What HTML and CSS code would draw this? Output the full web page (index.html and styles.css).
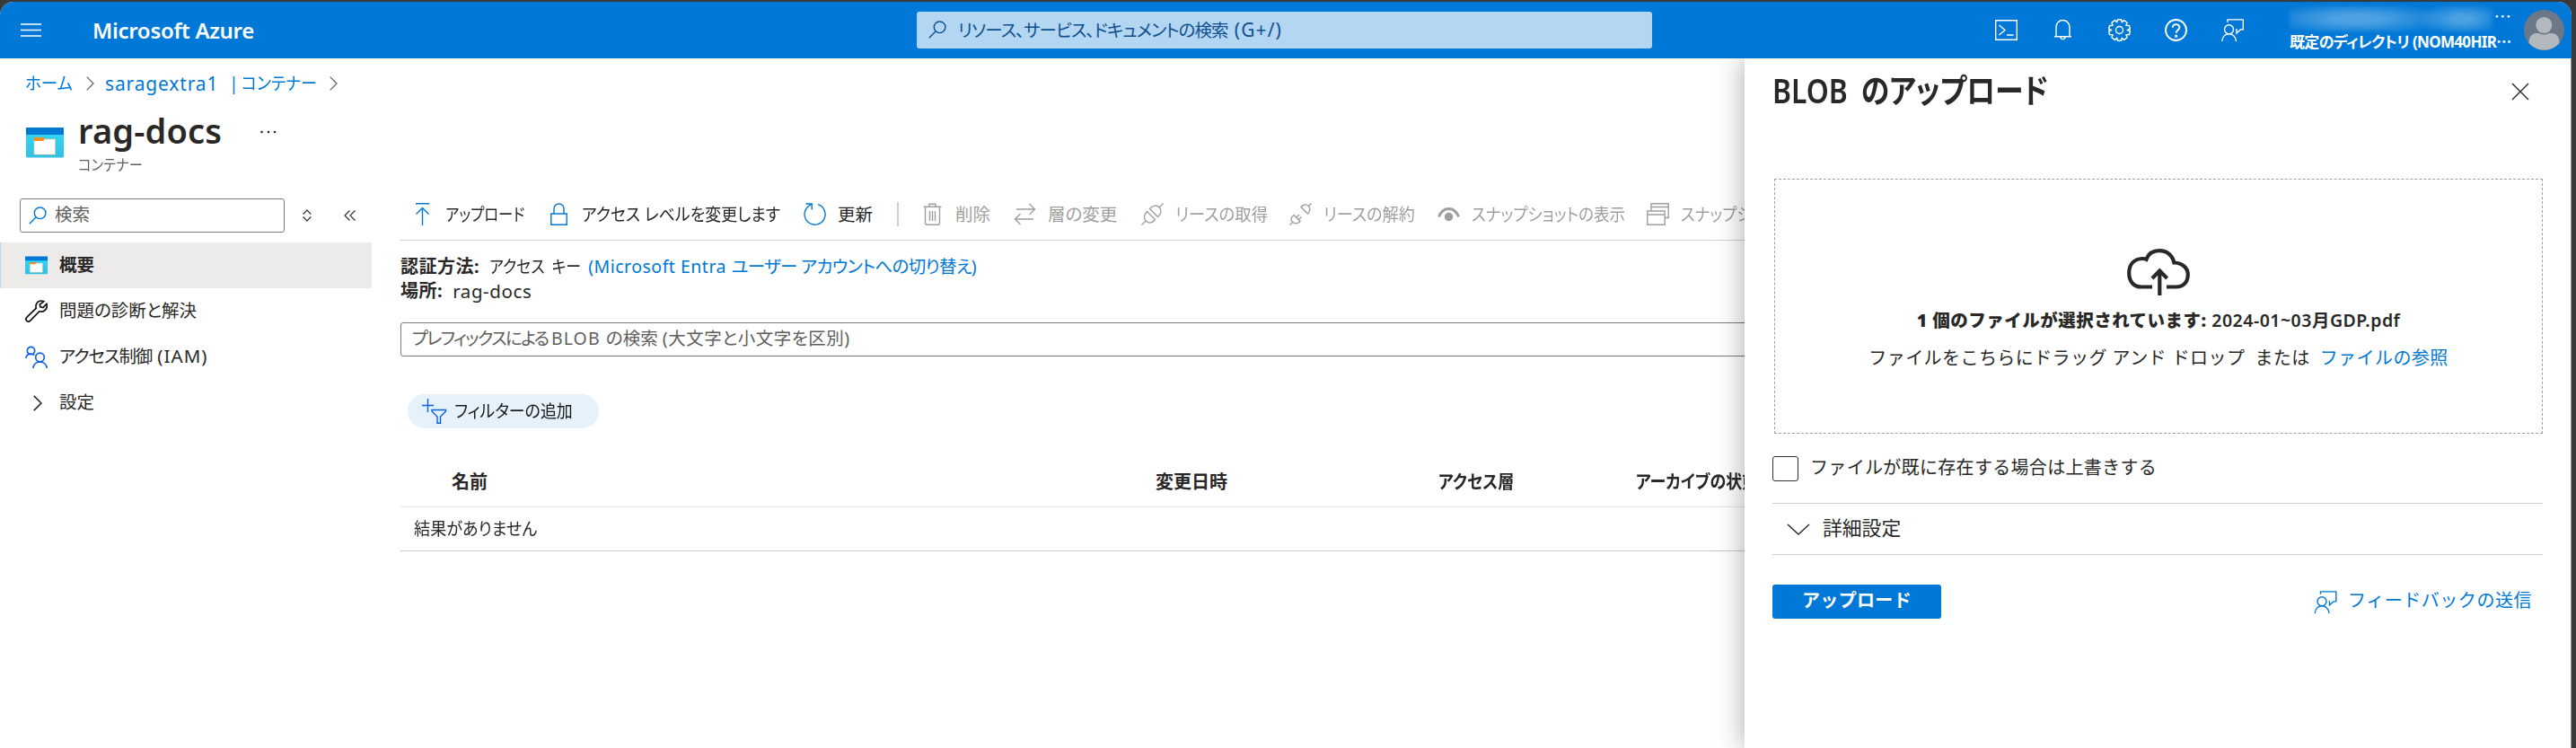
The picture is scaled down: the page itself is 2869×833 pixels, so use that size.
FILE: index.html
```html
<!DOCTYPE html>
<html lang="ja">
<head>
<meta charset="utf-8">
<title>rag-docs - Microsoft Azure</title>
<link rel="stylesheet" href="styles.css">
</head>
<body>
<svg class="defs" aria-hidden="true">
  <defs>
    <linearGradient id="teal" x1="0" y1="0" x2="0" y2="1"><stop offset="0" stop-color="#32d4f5"/><stop offset="1" stop-color="#32bfe0"/></linearGradient>
    <symbol id="i-container" viewBox="0 0 42 34">
      <path d="M0 7h42v25a1.5 1.5 0 0 1-1.5 1.5h-39A1.5 1.5 0 0 1 0 32z" fill="url(#teal)" stroke="none"/>
      <path d="M1 0h40a1 1 0 0 1 1 1v7H0V1a1 1 0 0 1 1-1z" fill="#0078d4" stroke="none"/>
      <path d="M9 13h23.5v17H9z" fill="#fff" stroke="#f3c98e" stroke-width=".6"/>
      <path d="M9.500 11h9.500q2 0 1.500 1.500L19.500 15H9.500q-.8 0-.8-.8v-2.400q0-.8.8-.8z" fill="#f78d1e" stroke="none"/>
    </symbol>
    <symbol id="i-search" viewBox="0 0 20 20"><circle cx="12.600" cy="7.300" r="6.300"/><path d="M8.200 11.800L.8 19.200"/></symbol>
    <symbol id="i-feedback" viewBox="0 0 25 25"><circle cx="8.500" cy="11.800" r="5"/><path d="M.8 25c.3-5 3.500-8.200 7.700-8.200s7.700 3.200 8 8.200M7 3.800V.9h17.300v11h-3l-4.300 4v-4h-1"/></symbol>
    <symbol id="i-chev" viewBox="0 0 9 16"><path d="M.7.7L8 8 .7 15.300"/></symbol>
  </defs>
</svg>
<div class="window">
  <header class="topbar">
    <svg class="menu" viewBox="0 0 23 15"><path d="M0 1h23M0 7.500h23M0 14h23"/></svg>
    <span class="brand">Microsoft Azure</span>
    <div class="global-search">
      <svg class="ic20"><use href="#i-search"/></svg>
      <span class="gs-text">リソース、サービス、ドキュメントの検索 <span class="gs-key">(G+/)</span></span>
    </div>
    <nav class="top-icons">
      <svg viewBox="0 0 25 25"><path d="M.7 1.700h23.600v21.600H.7zM4.500 7l6.500 5.500L4.500 18M13 18h7.500"/></svg>
      <svg viewBox="0 0 25 25"><path d="M5 19.500V9a7.500 7.500 0 0 1 15 0v10.500M3 19.700h19M10 20c0 3.500 5 3.500 5 0"/></svg>
      <svg viewBox="0 0 25 25"><circle cx="12.500" cy="12.500" r="4"/><path d="M10.500.8h4l.8 3 2.300-2.200 3.500 2.700-1.200 3 3.600.2.800 4-3 1 3 1-.8 4-3.600.2 1.200 3-3.500 2.700-2.300-2.200-.8 3h-4l-.8-3-2.300 2.200-3.500-2.700 1.200-3-3.600-.2-.8-4 3-1-3-1 .8-4 3.600-.2-1.200-3 3.500-2.700 2.300 2.200z" stroke-linejoin="round"/></svg>
      <svg class="bold-ic" viewBox="0 0 25 25"><circle cx="12.500" cy="12.500" r="11.500"/><path d="M8.800 9.800c0-5 7.600-4.800 7.600-.2 0 3-3.800 3-3.800 6.200"/><circle cx="12.600" cy="19.200" r=".7"/></svg>
      <svg><use href="#i-feedback"/></svg>
    </nav>
    <div class="account">
      <div class="user"><span class="blurred"></span><span class="dots">…</span></div>
      <div class="directory">既定のディレクトリ (NOM40HIR<span class="dots">…</span></div>
    </div>
    <svg class="avatar" viewBox="0 0 45 45"><circle cx="22.500" cy="22.500" r="22.500" fill="#6b7888"/><path d="M5.500 37c0-7 3-11 9-11h16c6 0 9 4 9 11a22.500 22.500 0 0 1-34 0z" fill="#b3b8bf"/><circle cx="22.300" cy="17" r="9.800" fill="#b3b8bf" stroke="#6b7888" stroke-width="1.500"/></svg>
  </header>

  <div class="workspace">
    <nav class="crumbs">
      <a class="crumb-home narrow">ホーム</a><svg><use href="#i-chev"/></svg>
      <a class="crumb-account"><span class="account-name">saragextra1</span><span class="bar">|</span><span class="narrow n92">コンテナー</span></a><svg><use href="#i-chev"/></svg>
    </nav>
    <div class="title">
      <svg class="title-ic"><use href="#i-container"/></svg>
      <div>
        <div class="title-row"><h1>rag-docs</h1><svg class="more" viewBox="0 0 18 4"><circle cx="1.500" cy="2" r="1.300"/><circle cx="9" cy="2" r="1.300"/><circle cx="16" cy="2" r="1.300"/></svg></div>
        <div class="subtitle"><span class="narrow n93">コンテナー</span></div>
      </div>
    </div>
    <div class="columns">
      <aside class="side">
        <div class="side-search">
          <div class="field"><svg class="ic20"><use href="#i-search"/></svg><span>検索</span></div>
          <svg class="sort" viewBox="0 0 10 14"><path d="M.7 5.500L5 1l4.300 4.500M.7 8.500L5 13l4.300-4.500"/></svg>
          <svg class="collapse" viewBox="0 0 14 12"><path d="M6.500.5L1 6l5.500 5.500M12.500.5L7 6l5.500 5.500"/></svg>
        </div>
        <ul>
          <li class="on"><svg class="s-cont"><use href="#i-container"/></svg><span>概要</span></li>
          <li><svg viewBox="0 0 25 25" class="wrench"><path d="M20.800 1.700c-3-1.500-6.700-.5-8.200 2.600-.8 1.700-.8 3.300-.3 4.900L1.800 19.300c-2.600 2.700 1.200 6.500 3.900 3.900L15.900 12.700c5 1.600 9.800-3 8-8.300l-4 4.100-3-.6-.6-2.900z"/></svg><span>問題の診断と解決</span></li>
          <li><svg viewBox="0 0 25 25" class="people"><circle cx="6.500" cy="5.500" r="4.200"/><path d="M.9 14c.3-3 2.500-4.800 5.500-4.800 1.700 0 3 .5 4 1.600"/><circle cx="16.500" cy="13" r="4.800"/><path d="M8.900 25c.5-4.300 3.600-7 7.600-7s7.200 2.700 7.700 7"/></svg><span class="iam">アクセス制御 <span class="iam-code">(IAM)</span></span></li>
          <li><svg class="s-chev"><use href="#i-chev"/></svg><span>設定</span></li>
        </ul>
      </aside>
      <main>
        <div class="toolbar">
          <div class="cmd"><svg viewBox="0 0 25 25"><path d="M5 .8h15M12.500 25V6M5.500 12.500l7-7 7 7"/></svg><span class="narrow n84">アップロード</span></div>
          <div class="cmd"><svg viewBox="0 0 25 25"><path d="M3.800 12h17.400v12.200H3.800zM7 12V6.500a5.500 5.500 0 0 1 11 0V12"/></svg><span class="narrow n92">アクセス レベルを変更します</span></div>
          <div class="cmd"><svg viewBox="0 0 25 25"><path d="M16 1.700A11.500 11.500 0 1 1 4.500 4.500L8.500 1.200M2.500 1h6.700v6.500"/></svg><span>更新</span></div>
          <i class="sep"></i>
          <div class="cmd off"><svg viewBox="0 0 25 25"><path d="M2.500 4.300h20M4.500 4.300v18q0 1.900 1.900 1.900h12.200q1.900 0 1.900-1.900v-18M9 4V1.200h7V4M9.500 9v11M12.500 9v11M15.500 9v11"/></svg><span>削除</span></div>
          <div class="cmd off"><svg viewBox="0 0 25 25"><path d="M3 7h20.500M17.500 1l6 6-6 6M22 18H1.500M7.500 12l-6 6 6 6"/></svg><span>層の変更</span></div>
          <div class="cmd off"><svg viewBox="0 0 25 25"><path d="M.5 24.500l4.500-4.500M20 5l4.500-4.500M6.500 9.500l9 9c-3 4-7 4.500-10 1.700s-2.500-7 1-10.700zM9.500 6.500l9 9c4-3.500 4.500-7.500 1.700-10.500s-7-2.500-10.700 1.500z"/></svg><span class="narrow n94">リースの取得</span></div>
          <div class="cmd off"><svg viewBox="0 0 25 25"><path d="M.5 24.500l3-3M21.500 3.500l3-3M5 13.500l7 7c-2.500 3-6 3-8.500.8S1.500 16 5 13.500zM8 16l3-3M10.500 18.500l3-3M13 4.500l7.500 7.500c3-2.500 3-6 .8-8.500S15.500 1.500 13 4.500z"/></svg><span class="narrow n93">リースの解約</span></div>
          <div class="cmd off"><svg viewBox="0 0 25 25"><path d="M1.500 15.500C4 9 8 6.500 12.500 6.500S21 9 23.500 15.500" stroke-width="3"/><circle cx="12.500" cy="15.500" r="4" fill="#a19f9d"/></svg><span class="narrow n90">スナップショットの表示</span></div>
          <div class="cmd off"><svg viewBox="0 0 25 25"><path d="M.8 9h19.400v15.200H.8zM.8 13h19.400M5 9V.8h19.200V16.500h-4M5 4.500h19"/></svg><span class="narrow n90">スナップショットの作成</span></div>
        </div>
        <div class="meta">
          <div><b>認証方法:</b><span class="auth-value narrow">アクセス キー</span><a class="auth-switch"><span class="wide">(Microsoft Entra </span>ユーザー アカウントへの切り替え)</a></div>
          <div><b>場所:</b><span class="place">rag-docs</span></div>
        </div>
        <div class="prefix"><span><span class="prefix-lead">プレフィックスによる </span><span class="wider">BLOB </span>の検索 <span class="wide">(大文字と小文字を区別)</span></span></div>
        <div class="pill"><svg viewBox="0 0 28 28"><path d="M6.500 0v15M0 7.500h13M11 12.500h15.500v1.500l-6 6v7.200h-3.500V20l-6-6z"/></svg><span class="narrow n92">フィルターの追加</span></div>
        <div class="thead"><b>名前</b><b>変更日時</b><b class="narrow n90">アクセス層</b><b class="narrow n90">アーカイブの状態</b></div>
        <div class="empty"><span class="narrow n93">結果がありません</span></div>
      </main>
    </div>
  </div>

  <section class="panel">
    <div class="panel-head"><h2 class="narrow">BLOB のアップロード</h2><svg viewBox="0 0 20 20"><path d="M1 1l18 18M19 1L1 19"/></svg></div>
    <div class="drop">
      <svg class="cloud" viewBox="0 0 70 52"><path d="M28 42.500H15.500C8 42.500 2.200 37 2.200 27c0-9 5-15.500 15-16 1.800-.1 3 .2 4.300.8C24 5 29.500 2.200 36 2.200c8.500 0 14.800 5.500 16.300 13.300C62 16 67.800 21.500 67.800 29S63 42.500 54.500 42.500H44"/><path d="M36.300 52V25M28 33l8.300-8.500 8.300 8.500"/></svg>
      <div class="picked"><b>1 個のファイルが選択されています:</b> 2024-01~03月GDP.pdf</div>
      <div class="drag"><span>ファイルをこちらにドラッグ アンド ドロップ</span><span>または</span><a>ファイルの参照</a></div>
    </div>
    <label class="overwrite"><i></i><span>ファイルが既に存在する場合は上書きする</span></label>
    <div class="advanced"><svg viewBox="0 0 26 13"><path d="M1 1l12 11L25 1"/></svg><span>詳細設定</span></div>
    <div class="actions"><button>アップロード</button><a><svg><use href="#i-feedback"/></svg><span>フィードバックの送信</span></a></div>
  </section>
</div>
</body>
</html>
```
FILE: styles.css
```css
* { box-sizing: border-box; }
body {
  margin: 0;
  padding-top: 2px;
  width: 2869px;
  height: 833px;
  overflow: hidden;
  background: #3a3a3a;
  color: #292827;
  font: 19.5px/26px "Noto Sans", "Noto Sans CJK JP", sans-serif;
  font-feature-settings: "palt";
}
svg { display: block; flex: none; fill: none; stroke: currentColor; stroke-width: 1.4; }
.defs { position: absolute; width: 0; height: 0; }
h1, h2, ul { margin: 0; padding: 0; list-style: none; }
span, b, a, h1, h2, .directory { white-space: nowrap; }
a { color: #0078d4; }
.ic20 { width: 20px; height: 20px; }

/* condensed kana, as in the UI typeface */
.narrow { display: inline-block; transform: scaleX(var(--sx, .95)); transform-origin: 0 50%; }
.n84 { --sx: .84; }
.n90 { --sx: .9; }
.n92 { --sx: .92; }
.n93 { --sx: .93; }
.n94 { --sx: .94; }
.wide { letter-spacing: .5px; }
.wider { letter-spacing: 1.100px; }

.window { position: relative; width: 2864px; height: 831px; border-radius: 15px 15px 0 0; overflow: hidden; background: #fff; }

.topbar { display: flex; align-items: center; height: 63px; padding-left: 23px; background: #0078d7; color: #fff; }
.menu { width: 23px; height: 15px; stroke-width: 1.5; }
.brand { width: 918px; margin-left: 57px; font-size: 24px; font-weight: 600; letter-spacing: -.3px; }
.global-search { display: flex; align-items: center; width: 819px; height: 41px; margin-top: -1px; padding-left: 13px; gap: 13px; border-radius: 3px; background: #b3d6f2; color: #10508f; }
.gs-text { letter-spacing: -.9px; }
.gs-key { margin-left: 3px; font-size: 21px; letter-spacing: 1.100px; }
.top-icons { display: flex; gap: 38px; margin-left: 382px; }
.top-icons svg { width: 25px; height: 25px; }
.top-icons .bold-ic { stroke-width: 1.9; }
.account { width: 247px; margin-left: 51px; }
.user { display: flex; height: 28px; justify-content: space-between; }
.blurred { width: 226px; height: 28px; background: radial-gradient(ellipse 105px 19px at 33% 50%, #4ea2e2 25%, transparent), radial-gradient(ellipse 50px 19px at 85% 50%, #4ea2e2 20%, transparent); filter: blur(2px); }
.dots { font-family: "Noto Sans CJK JP", sans-serif; font-feature-settings: normal; line-height: 22px; }
.directory { font-size: 17px; font-weight: 700; line-height: 22px; padding-bottom: 2px; letter-spacing: -.67px; }
.avatar { width: 45px; height: 45px; margin-left: 14px; stroke: none; }

.crumbs { display: flex; align-items: center; height: 55px; padding-left: 28px; }
.crumbs svg { width: 9px; height: 16px; color: #605e5c; stroke-width: 1.2; }
.crumb-home { width: 68px; }
.crumb-account { display: flex; width: 250px; margin-left: 12px; }
.account-name { width: 138px; font-size: 21px; letter-spacing: .85px; }
.bar { width: 14px; }
.title { display: flex; height: 94px; padding-left: 29px; }
.title-ic { width: 42px; height: 34px; margin: 22px 16px 0 0; }
.title-row { display: flex; align-items: center; height: 54px; }
h1 { width: 203px; font-size: 38px; line-height: 50px; padding-bottom: 4px; font-weight: 600; letter-spacing: .15px; }
.more { width: 18px; height: 4px; fill: #292827; stroke: none; }
.subtitle { font-size: 16.500px; line-height: 20px; color: #605e5c; }

.columns { display: flex; }
.side { width: 446px; }
.side-search { display: flex; align-items: center; height: 51px; margin: 5px 0 0 22px; padding-bottom: 9px; }
.field { display: flex; align-items: center; gap: 9px; width: 295px; height: 38px; padding-left: 9px; margin-right: 20px; border: 1px solid #7a7876; border-radius: 3px; color: #605e5c; }
.field span { padding-bottom: 2px; }
.field .ic20 { color: #0078d4; }
.sort { width: 10px; height: 14px; margin-right: 36px; stroke-width: 1.1; }
.collapse { width: 14px; height: 12px; stroke-width: 1.1; }
.side li { display: flex; align-items: center; gap: 13px; width: 414px; height: 51px; padding-left: 28px; }
.side li > span { padding-bottom: 2px; }
.side li svg { width: 25px; height: 25px; }
.side li.on { background: #edebe9; border-left: 1px solid #b3d6f2; padding-left: 27px; font-weight: 700; }
.side li .wrench { stroke: #111; stroke-width: 1.700; }
.side li .people { stroke: #0b5fe0; stroke-width: 1.700; }
.side li .s-chev { width: 10px; height: 18px; margin: 0 6px 0 9px; }
.iam { letter-spacing: -1.100px; }
.iam-code { margin-left: 2px; font-size: 20.500px; letter-spacing: 1.100px; }

main { width: 1500px; }
.toolbar { display: grid; grid-template-columns: 152px 285px 104px 27px 103px 142px 165px 165px 233px 230px; height: 54px; padding: 0 0 4px 12px; align-items: center; border-bottom: 1px solid #d2d0ce; }
.cmd { display: flex; align-items: center; gap: 13px; }
.cmd svg { width: 25px; height: 25px; color: #0078d4; }
.cmd.off, .cmd.off svg { color: #a19f9d; }
.sep { width: 2px; height: 27px; background: #d2d0ce; }
.meta { height: 91px; padding-top: 15px; }
.meta > div { display: flex; gap: 11px; height: 27px; align-items: center; }
.meta b { font-size: 20px; letter-spacing: .5px; }
.auth-value { --sx: .87; width: 99px; word-spacing: 4px; }
.auth-switch { letter-spacing: -.7px; }
.place { font-size: 20.500px; letter-spacing: .6px; }
.prefix { display: flex; align-items: center; height: 38px; padding: 0 0 2px 12px; border: 1px solid #7a7876; border-radius: 3px; color: #605e5c; }
.prefix-lead { letter-spacing: -1.700px; }
.pill { display: flex; align-items: center; gap: 8px; width: 213px; height: 38px; margin: 42px 0 0 8px; padding-left: 16px; border-radius: 19px; background: #e5f1fb; color: #1b1a19; }
.pill svg { width: 28px; height: 28px; color: #0b5fe0; }
.thead { display: grid; grid-template-columns: 784px 315px 220px 180px; align-items: center; height: 88px; padding: 32px 0 0 57px; border-bottom: 1px solid #e6e5e4; font-size: 20px; }
.empty { display: flex; align-items: center; height: 49px; padding-left: 15px; border-bottom: 1px solid #c8c6c4; }

.panel { position: absolute; left: 1943px; top: 63px; width: 921px; bottom: 0; padding: 0 31px; background: #fff; border-right: 1px solid #999; box-shadow: 0 0 30px rgba(0, 0, 0, .35); clip-path: inset(0 0 0 -50px); font-feature-settings: normal; }
.panel-head { display: flex; justify-content: space-between; align-items: flex-start; height: 134px; padding: 13px 15px 0 0; }
h2 { --sx: .86; font-size: 37px; line-height: 46px; font-weight: 600; word-spacing: 8px; font-feature-settings: "palt"; }
.panel-head svg { width: 20px; height: 20px; margin-top: 14px; }
.drop { display: flex; flex-direction: column; align-items: center; width: 856px; height: 284px; margin-left: 2px; padding-top: 77px; border: 1px dashed #a19f9d; }
.cloud { width: 70px; height: 52px; stroke-width: 4.200; }
.picked { margin-top: 15px; font-weight: 600; letter-spacing: .5px; }
.drag { display: flex; gap: 11px; margin-top: 16px; font-size: 20px; letter-spacing: .43px; }
.overwrite { display: flex; align-items: center; gap: 13px; height: 77px; font-size: 20px; letter-spacing: .32px; }
.overwrite span, .advanced span, .actions span { padding-bottom: 2px; }
.overwrite i { width: 29px; height: 28px; border: 1.500px solid #323130; border-radius: 3px; }
.advanced { display: flex; align-items: center; gap: 14px; height: 58px; padding-left: 16px; border: 1px solid #d2d0ce; border-width: 1px 0; font-size: 21.800px; }
.advanced svg { width: 26px; height: 13px; }
.actions { display: flex; justify-content: space-between; margin-top: 33px; }
.actions button { width: 188px; height: 38px; padding: 0 0 2px; border: 0; border-radius: 3px; background: #0078d7; color: #fff; font: 700 20px/26px "Noto Sans", "Noto Sans CJK JP", sans-serif; letter-spacing: .33px; }
.actions a { display: flex; align-items: center; gap: 12px; padding-right: 12px; font-size: 20px; letter-spacing: .54px; }
.actions svg { width: 26px; height: 25px; }
```
